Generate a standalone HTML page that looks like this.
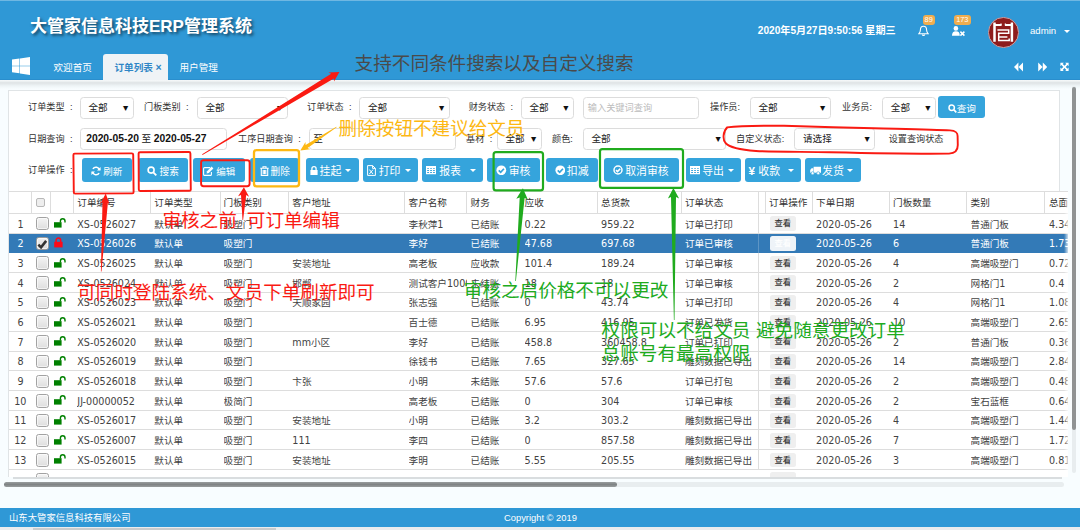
<!DOCTYPE html>
<html lang="zh-CN"><head><meta charset="utf-8"><title>大管家信息科技ERP管理系统</title>
<style>
*{box-sizing:border-box;margin:0;padding:0}
html,body{width:1080px;height:530px;overflow:hidden;background:#f8fdff;font-family:"Liberation Sans","Noto Sans CJK SC",sans-serif;font-size:9.6px;color:#333}
.abs{position:absolute}
#hdr{position:absolute;left:0;top:0;width:1080px;height:80px;background:#2f98d6;border-bottom:1px solid #2a8ecd}
#hshadow{position:absolute;left:0;top:80px;width:1080px;height:9px;background:linear-gradient(#f6f9fa 0,#f0f4f5 12%,#dfe4e6 30%,#e3e8ea 42%,#eef4f6 65%,#f8fdff 100%)}
#topline{position:absolute;left:0;top:0;width:1080px;height:1px;background:#6fb7e2}
#title{position:absolute;left:30px;top:15.1px;font-size:17px;font-weight:bold;color:#fff;line-height:24px;white-space:nowrap;text-shadow:2px 2px 3px rgba(0,0,0,.55);letter-spacing:0px}
.tab{position:absolute;top:54px;height:26px;line-height:27.8px;color:#fff;font-size:9.6px;white-space:nowrap}
#tabact{position:absolute;left:103px;top:54px;width:64.5px;height:26px;background:#eff3f6;border-radius:3px 3px 0 0}
#dt{position:absolute;left:757.8px;top:24.2px;font-size:10.15px;font-weight:bold;color:#fff;line-height:14px;white-space:nowrap}
.badge{position:absolute;background:#f0ad4e;color:#fff;border-radius:3px;font-size:7.4px;line-height:9.4px;height:9.4px;text-align:center}
#panel{position:absolute;left:8px;top:90px;width:1052px;height:390px;background:#fff;border:1px solid #e0e4e6;border-bottom:none}
.lbl{position:absolute;font-size:9.15px;line-height:14px;color:#333;white-space:nowrap}
.sel{position:absolute;height:22px;border:1px solid #dcdcdc;border-radius:3.5px;background:#fff;font-size:9.6px;line-height:20px;padding-left:7.5px;color:#222;white-space:nowrap;overflow:hidden}
.sel i{position:absolute;right:2.6px;top:0.4px;font-style:normal;font-size:8.8px;color:#111}
.btn{position:absolute;top:158.4px;height:23.5px;background:#35a4dc;border-radius:3px;color:#fff;font-size:10.4px;line-height:24.4px;overflow:hidden;text-align:left;white-space:nowrap;text-align:center}
.btn svg{vertical-align:-1.2px}
.caret{display:block;width:0;height:0;border-left:3.2px solid transparent;border-right:3.2px solid transparent;border-top:3.4px solid #fff;vertical-align:1.6px;margin-left:3px}
#thead{position:absolute;left:9px;top:191.3px;width:1058.7px;height:22.5px;background:#fff;border-top:1px solid #ddd;border-bottom:1px solid #ddd}
.vs{position:absolute;top:191.3px;width:1px;height:22.5px;background:#ddd}
.th{position:absolute;top:196px;font-size:9.6px;line-height:14px;color:#333;white-space:nowrap}
.row{position:absolute;left:9px;width:1058.7px;height:19.67px;border-bottom:1px solid #ddd;background:#fff;font-family:"DejaVu Sans","Noto Sans CJK SC",sans-serif;font-size:9.6px;color:#424242}
.row.sel2{background:#337ab7;color:#fff;border-bottom-color:#337ab7}
.c{position:absolute;top:0.8px;line-height:19.6px;white-space:nowrap}
.cb{position:absolute;left:26.5px;top:3.2px;width:13.4px;height:13.4px;border:1px solid #a2a2a2;border-radius:2.6px;background:linear-gradient(#f4f4f4,#dedede);box-shadow:inset 0 0 0 1px rgba(255,255,255,.6)}
.view{position:absolute;left:760.8px;top:2.5px;width:26px;height:14.7px;background:#efefef;border-radius:2.5px;font-size:8.3px;line-height:15.4px;text-align:center;color:#333;font-weight:500;font-family:"Liberation Sans","Noto Sans CJK SC",sans-serif}
.sel2 .view{background:#eef3f8;color:#fff}
#foot{position:absolute;left:0;top:507.8px;width:1080px;height:19.6px;background:#2f98d6;color:#fff;font-size:9.35px;line-height:20.8px}
svg.ov{position:absolute;left:0;top:0;width:1080px;height:530px;pointer-events:none}
svg.ov text{font-family:"Liberation Sans","Noto Sans CJK SC",sans-serif;font-weight:400}
</style></head><body>

<div id="hshadow"></div><div id="hdr"><div id="topline"></div>
<div id="title">大管家信息科技ERP管理系统</div>
<svg class="abs" style="left:11.6px;top:57px" width="18.4" height="18" viewBox="0 0 18.4 18"><path fill="#fff" d="M0 2.6 L7.5 1.5 V8.7 H0Z M8 1.4 L18.4 0 V8.7 H8Z M0 9.2 H7.5 V16.3 L0 15.2Z M8 9.2 H18.4 V18 L8 16.5Z"/></svg>
<div class="tab" style="left:53.5px">欢迎首页</div>
<div id="tabact"></div>
<div class="tab" style="left:114.5px;color:#2f86c6;font-weight:bold">订单列表 <span style="font-size:10.5px;font-weight:bold">×</span></div>
<div class="tab" style="left:179.5px">用户管理</div>
<div id="dt">2020年5月27日9:50:56 星期三</div>
<svg class="abs" style="left:917.5px;top:25px" width="11" height="12" viewBox="0 0 11 12"><path fill="none" stroke="#fff" stroke-width="1.1" d="M5.5 1.2 C3.3 1.2 2.4 3 2.4 5 C2.4 7 1.6 8 0.8 8.8 H10.2 C9.4 8 8.6 7 8.6 5 C8.6 3 7.7 1.2 5.5 1.2Z M4.3 9.6 C4.5 10.6 6.5 10.6 6.7 9.6"/></svg>
<div class="badge" style="left:922.6px;top:15.3px;width:12.2px">89</div>
<svg class="abs" style="left:951.6px;top:25.6px" width="14" height="11" viewBox="0 0 14 11"><circle cx="3.9" cy="2.4" r="2.3" fill="#fff"/><path fill="#fff" d="M0 9.8 C0 6.4 1.3 5.2 3.9 5.2 C6.5 5.2 7.8 6.4 7.8 9.8Z"/><path stroke="#fff" stroke-width="1.5" d="M8.4 5.6 L12.4 9.6 M12.4 5.6 L8.4 9.6"/></svg>
<div class="badge" style="left:954px;top:15.3px;width:16.6px">173</div>
<div class="abs" style="left:988px;top:17.1px;width:30.6px;height:30.6px;border-radius:50%;background:#8e1c1c;border:0.8px solid #c9a0a4"></div>
<svg class="abs" style="left:988px;top:17px" width="31" height="31" viewBox="988 17 31 31"><g fill="none" stroke="#fff"><path stroke-width="2.5" d="M994.5 22.4 V41.8 M1011.9 22.4 V41.8"/><path stroke-width="2" d="M995 25 H1001.4 M1005 25 H1011.4"/><path stroke-width="1.3" d="M1001 23.4 V25.6 M1005.4 23.4 V25.6"/><path stroke-width="1.5" d="M997.4 29.9 H1008.7 V33.3 H998.7 V40.5 H1009.2 V38.4 M998.7 36.9 H1007.4"/></g></svg>
<div class="abs" style="left:1030px;top:24px;font-size:9.6px;line-height:14px;color:#fff">admin</div>
<div class="abs" style="left:1063.5px;top:29.7px;width:0;height:0;border-left:3.2px solid transparent;border-right:3.2px solid transparent;border-top:3.4px solid #fff"></div>
<svg class="abs" style="left:1013px;top:62px" width="60" height="10" viewBox="0 0 60 10"><path fill="#fff" d="M5.4 0.6 L1 5 L5.4 9.4Z M10 0.6 L5.6 5 L10 9.4Z M25.2 0.6 L29.6 5 L25.2 9.4Z M29.8 0.6 L34.2 5 L29.8 9.4Z"/><path fill="#fff" d="M47.4 0.8 H50.8 L49.7 1.9 L51.5 3.7 L53.3 1.9 L52.2 0.8 H55.6 V4.2 L54.5 3.1 L52.7 4.9 L54.5 6.7 L55.6 5.6 V9 H52.2 L53.3 7.9 L51.5 6.1 L49.7 7.9 L50.8 9 H47.4 V5.6 L48.5 6.7 L50.3 4.9 L48.5 3.1 L47.4 4.2Z"/></svg>
</div>
<div id="panel"></div>
<div class="lbl" style="left:28px;top:100.3px">订单类型<span style="margin-left:5.4px">:</span></div>
<div class="sel" style="left:80px;top:96.5px;width:53.6px;">全部<i>▼</i></div>
<div class="lbl" style="left:144px;top:100.3px">门板类别<span style="margin-left:5.4px">:</span></div>
<div class="sel" style="left:197px;top:96.5px;width:90.6px;">全部<i>▼</i></div>
<div class="lbl" style="left:307px;top:100.3px">订单状态<span style="margin-left:5.4px">:</span></div>
<div class="sel" style="left:359.4px;top:96.5px;width:90.2px;">全部<i>▼</i></div>
<div class="lbl" style="left:468.7px;top:100.3px">财务状态<span style="margin-left:5.4px">:</span></div>
<div class="sel" style="left:521px;top:96.5px;width:52.8px;">全部<i>▼</i></div>
<div class="sel" style="left:583px;top:96.5px;width:115.5px;padding-left:3.8px"><span style="color:#bcbcbc;font-size:9.2px">输入关键词查询</span></div>
<div class="lbl" style="left:710px;top:100.3px">操作员:</div>
<div class="sel" style="left:750px;top:96.5px;width:80.6px;">全部<i>▼</i></div>
<div class="lbl" style="left:842px;top:100.3px">业务员:</div>
<div class="sel" style="left:882.3px;top:96.5px;width:53.6px;">全部<i>▼</i></div>
<div class="btn" style="left:938.2px;top:95.5px;width:47.2px;height:22px;line-height:25.4px;font-size:9.6px"><svg width="9" height="9" viewBox="0 0 9 9"><circle cx="3.7" cy="3.7" r="2.7" fill="none" stroke="#fff" stroke-width="1.5"/><path d="M5.7 5.7 L8.3 8.3" stroke="#fff" stroke-width="1.7"/></svg>查询</div>
<div class="lbl" style="left:28px;top:131.6px">日期查询<span style="margin-left:5.4px">:</span></div>
<div class="sel" style="left:80px;top:127.5px;width:147px;padding-left:5.2px;color:#111"><b style="font-size:10.3px">2020-05-20</b> 至 <b style="font-size:10.3px">2020-05-27</b></div>
<div class="lbl" style="left:238px;top:131.6px">工序日期查询<span style="margin-left:5.4px">:</span></div>
<div class="sel" style="left:308.7px;top:127.5px;width:147px;padding-left:3.6px">至</div>
<div class="lbl" style="left:466px;top:131.6px">基材<span style="margin-left:5.4px">:</span></div>
<div class="sel" style="left:497px;top:127.5px;width:44.5px;">全部<i>▼</i></div>
<div class="lbl" style="left:552px;top:131.6px">颜色:</div>
<div class="sel" style="left:583px;top:127.5px;width:143px;">全部<i>▼</i></div>
<div class="lbl" style="left:736px;top:131.6px">自定义状态:</div>
<div class="sel" style="left:794px;top:127.5px;width:81px;padding-left:8px">请选择<i>▼</i></div>
<div class="lbl" style="left:888.7px;top:131.6px">设置查询状态</div>
<div class="lbl" style="left:28px;top:163px">订单操作<span style="margin-left:5.4px">:</span></div>
<div class="btn" style="left:81.6px;width:50.6px;font-size:9.5px"><svg class="abs" style="left:9.3px;top:7.8px" width="10" height="10" viewBox="0 0 10 10"><path fill="none" stroke="#fff" stroke-width="1.6" d="M8.6 4.2 A3.7 3.7 0 0 0 1.9 2.9 M1.4 5.8 A3.7 3.7 0 0 0 8.1 7.1"/><path fill="#fff" d="M9.6 1 V4.6 H6Z M0.4 9 V5.4 H4Z"/></svg><span class="abs" style="left:21.7px;top:1.9px">刷新</span></div>
<div class="btn" style="left:138.2px;width:50px;font-size:9.7px"><svg class="abs" style="left:8.5px;top:7.8px" width="10" height="10" viewBox="0 0 10 10"><circle cx="4.1" cy="4.1" r="3" fill="none" stroke="#fff" stroke-width="1.6"/><path d="M6.3 6.3 L9.3 9.3" stroke="#fff" stroke-width="1.9"/></svg><span class="abs" style="left:21.4px;top:1.9px">搜索</span></div>
<div class="btn" style="left:193.1px;width:52.2px;font-size:9.5px"><svg class="abs" style="left:10.2px;top:7.8px" width="11" height="10" viewBox="0 0 11 10"><path fill="none" stroke="#fff" stroke-width="1.1" d="M7 1.6 H1.6 Q0.6 1.6 0.6 2.6 V8.4 Q0.6 9.4 1.6 9.4 H7.4 Q8.4 9.4 8.4 8.4 V6"/><path fill="#fff" d="M4 5.2 L8.6 0.6 L10.4 2.4 L5.8 7 L3.6 7.4Z"/></svg><span class="abs" style="left:23.2px;top:1.9px">编辑</span></div>
<div class="btn" style="left:250.4px;width:48.5px;font-size:9.7px"><svg class="abs" style="left:9.8px;top:7.8px" width="9" height="10" viewBox="0 0 9 10"><path fill="none" stroke="#fff" stroke-width="1.1" d="M0.3 2.2 H8.7 M3 2 V0.7 H6 V2 M1.3 2.4 V9.4 H7.7 V2.4 M3.2 4 V8 M4.5 4 V8 M5.8 4 V8"/></svg><span class="abs" style="left:20.2px;top:1.9px">删除</span></div>
<div class="btn" style="left:305.9px;width:53px;font-size:10.9px"><svg class="abs" style="left:3.9px;top:7.3px" width="8" height="9" viewBox="0 0 8 9"><path fill="#fff" d="M0.4 4 H7.6 V9 H0.4Z"/><path fill="none" stroke="#fff" stroke-width="1.3" d="M1.9 4.4 V2.8 A2.1 2.1 0 0 1 6.1 2.8 V4.4"/></svg><span class="abs" style="left:13.7px;top:1.1px">挂起</span><span class="caret abs" style="left:39.1px;top:10.6px;margin:0"></span></div>
<div class="btn" style="left:362.5px;width:55.8px;font-size:10.9px"><svg class="abs" style="left:4.2px;top:6.3px" width="9" height="11" viewBox="0 0 9 11"><path fill="none" stroke="#fff" stroke-width="1" d="M0.6 0.6 H5.6 L8.4 3.4 V10.4 H0.6Z M5.6 0.6 V3.4 H8.4 M2.4 4.6 L6 9 M6 4.6 L2.4 9"/></svg><span class="abs" style="left:16.2px;top:1.1px">打印</span><span class="caret abs" style="left:42.5px;top:10.6px;margin:0"></span></div>
<div class="btn" style="left:422px;width:61px;font-size:10.9px"><svg class="abs" style="left:4.4px;top:7.3px" width="10" height="9" viewBox="0 0 10 9"><path fill="none" stroke="#fff" stroke-width="1.15" d="M0.6 0.6 H9.4 V7.6 H0.6Z M0.6 3.4 H9.4 M0.6 5.5 H9.4 M3.6 1.6 V7.6 M6.5 1.6 V7.6"/><path fill="#fff" d="M0.6 0.6 H9.4 V1.9 H0.6Z"/></svg><span class="abs" style="left:17.2px;top:1.1px">报表</span><span class="caret abs" style="left:47.5px;top:10.6px;margin:0"></span></div>
<div class="btn" style="left:486.8px;width:53.5px;font-size:10.9px"><svg class="abs" style="left:9.5px;top:6.5px" width="10.6" height="10.6" viewBox="0 0 10 10"><circle cx="5" cy="5" r="4.6" fill="#fff"/><path fill="none" stroke="#35a4dc" stroke-width="1.6" d="M2.6 5.1 L4.4 6.9 L7.5 3.5"/></svg><span class="abs" style="left:21.9px;top:1.1px">审核</span></div>
<div class="btn" style="left:545.5px;width:52.8px;font-size:10.9px"><svg class="abs" style="left:9.4px;top:6.5px" width="10.6" height="10.6" viewBox="0 0 10 10"><circle cx="5" cy="5" r="4.6" fill="#fff"/><path fill="none" stroke="#35a4dc" stroke-width="1.6" d="M2.6 5.1 L4.4 6.9 L7.5 3.5"/></svg><span class="abs" style="left:21.3px;top:1.1px">扣减</span></div>
<div class="btn" style="left:603.75px;width:75px;font-size:10.9px"><svg class="abs" style="left:9.4px;top:6.8px" width="10" height="10" viewBox="0 0 10 10"><circle cx="5" cy="5" r="4" fill="none" stroke="#fff" stroke-width="1.5"/><path fill="none" stroke="#fff" stroke-width="1.6" d="M3 5.1 L4.5 6.6 L7.2 3.7"/></svg><span class="abs" style="left:21.4px;top:1.1px">取消审核</span></div>
<div class="btn" style="left:685.75px;width:55.5px;font-size:10.9px"><svg class="abs" style="left:3.8px;top:7.3px" width="10" height="9" viewBox="0 0 10 9"><path fill="none" stroke="#fff" stroke-width="1.15" d="M0.6 0.6 H9.4 V7.6 H0.6Z M0.6 3.4 H9.4 M0.6 5.5 H9.4 M3.6 1.6 V7.6 M6.5 1.6 V7.6"/><path fill="#fff" d="M0.6 0.6 H9.4 V1.9 H0.6Z"/></svg><span class="abs" style="left:16.4px;top:1.1px">导出</span><span class="caret abs" style="left:42.2px;top:10.6px;margin:0"></span></div>
<div class="btn" style="left:745px;width:55.75px;font-size:10.9px"><span class="abs" style="left:3.5px;top:0.5px;font-weight:bold;font-size:11.6px">¥</span><span class="abs" style="left:13.3px;top:1.1px">收款</span><span class="caret abs" style="left:42.5px;top:10.6px;margin:0"></span></div>
<div class="btn" style="left:805px;width:55.5px;font-size:10.9px"><svg class="abs" style="left:4.5px;top:7.3px" width="11" height="9" viewBox="0 0 11 9"><path fill="#fff" d="M3.6 0.8 H11 V6.8 H3.6Z M0.2 4 L1.6 2.2 H3.2 V6.8 H0.2Z"/><circle cx="2.6" cy="7.2" r="1.5" fill="#fff" stroke="#35a4dc" stroke-width="0.6"/><circle cx="8.2" cy="7.2" r="1.5" fill="#fff" stroke="#35a4dc" stroke-width="0.6"/></svg><span class="abs" style="left:17.1px;top:1.1px">发货</span><span class="caret abs" style="left:42.0px;top:10.6px;margin:0"></span></div>
<div id="thead"></div>
<div class="vs" style="left:31px"></div>
<div class="vs" style="left:50px"></div>
<div class="vs" style="left:73px"></div>
<div class="vs" style="left:150px"></div>
<div class="vs" style="left:219.5px"></div>
<div class="vs" style="left:288px"></div>
<div class="vs" style="left:404px"></div>
<div class="vs" style="left:466px"></div>
<div class="vs" style="left:520px"></div>
<div class="vs" style="left:597px"></div>
<div class="vs" style="left:681px"></div>
<div class="vs" style="left:758px"></div>
<div class="vs" style="left:765px"></div>
<div class="vs" style="left:812px"></div>
<div class="vs" style="left:889px"></div>
<div class="vs" style="left:966px"></div>
<div class="vs" style="left:1044px"></div>
<div class="abs" style="left:35.8px;top:197.8px;width:9.6px;height:9.6px;border:1px solid #b8b8b8;border-radius:2px;background:#eee"></div>
<div class="th" style="left:77.3px">订单编号</div>
<div class="th" style="left:154.29999999999998px">订单类型</div>
<div class="th" style="left:223.6px">门板类别</div>
<div class="th" style="left:292.3px">客户地址</div>
<div class="th" style="left:408.6px">客户名称</div>
<div class="th" style="left:470.6px">财务</div>
<div class="th" style="left:524.6px">应收</div>
<div class="th" style="left:601.1px">总货款</div>
<div class="th" style="left:684.9px">订单状态</div>
<div class="th" style="left:769.1px">订单操作</div>
<div class="th" style="left:816.1px">下单日期</div>
<div class="th" style="left:893.1px">门板数量</div>
<div class="th" style="left:970.6px">类别</div>
<div class="th" style="left:1049.0px">总面</div>
<div class="row" style="top:213.90px">
<div class="c" style="left:8.6px">1</div>
<div class="cb"></div>
<svg class="abs" style="left:45.3px;top:4.4px" width="13" height="10" viewBox="0 0 13 10"><path fill="#008000" d="M0 4.2 H7.6 V9.6 H0Z"/><path fill="none" stroke="#008000" stroke-width="1.4" d="M6.4 4.6 V3 A2.3 2.3 0 0 1 11 3 V4.4"/></svg>
<div class="c" style="left:68.3px;width:73.4px;overflow:hidden">XS-0526027</div>
<div class="c" style="left:145.3px;width:65.7px;overflow:hidden">默认单</div>
<div class="c" style="left:214.6px;width:65.1px;overflow:hidden">吸塑门</div>
<div class="c" style="left:399.6px;width:58.4px;overflow:hidden">李秋萍1</div>
<div class="c" style="left:461.6px;width:50.4px;overflow:hidden">已结账</div>
<div class="c" style="left:515.6px;width:72.9px;overflow:hidden">0.22</div>
<div class="c" style="left:592.1px;width:80.2px;overflow:hidden">959.22</div>
<div class="c" style="left:675.9px;width:73.6px;overflow:hidden">订单已打印</div>
<div class="c" style="left:807.1px;width:73.4px;overflow:hidden">2020-05-26</div>
<div class="c" style="left:884.1px;width:73.9px;overflow:hidden">14</div>
<div class="c" style="left:961.6px;width:74.8px;overflow:hidden">普通门板</div>
<div class="c" style="left:1040.0px;width:26.0px;overflow:hidden">4.34</div>
<div class="view">查看</div>
<div class="abs" style="left:749px;top:0;width:1px;height:19.67px;background:#ddd"></div>
</div>
<div class="row sel2" style="top:233.58px">
<div class="c" style="left:8.6px">2</div>
<div class="cb" style="background:linear-gradient(#eee,#dcdcdc);border-color:#9a9a9a"><svg class="abs" style="left:0.8px;top:1px" width="10.4" height="10.4" viewBox="0 0 10 10"><path fill="none" stroke="#333" stroke-width="2.5" d="M1.3 5.4 L3.9 8 L8.8 1.8"/></svg></div>
<svg class="abs" style="left:45.3px;top:3.6px" width="9" height="11" viewBox="0 0 9 11"><path fill="#ff0a18" d="M0.2 4.8 H8.6 V10.4 H0.2Z"/><path fill="none" stroke="#ff0a18" stroke-width="1.5" d="M2.1 5 V3.3 A2.3 2.3 0 0 1 6.7 3.3 V5"/></svg>
<div class="c" style="left:68.3px;width:73.4px;overflow:hidden">XS-0526026</div>
<div class="c" style="left:145.3px;width:65.7px;overflow:hidden">默认单</div>
<div class="c" style="left:214.6px;width:65.1px;overflow:hidden">吸塑门</div>
<div class="c" style="left:399.6px;width:58.4px;overflow:hidden">李好</div>
<div class="c" style="left:461.6px;width:50.4px;overflow:hidden">已结账</div>
<div class="c" style="left:515.6px;width:72.9px;overflow:hidden">47.68</div>
<div class="c" style="left:592.1px;width:80.2px;overflow:hidden">697.68</div>
<div class="c" style="left:675.9px;width:73.6px;overflow:hidden">订单已审核</div>
<div class="c" style="left:807.1px;width:73.4px;overflow:hidden">2020-05-26</div>
<div class="c" style="left:884.1px;width:73.9px;overflow:hidden">6</div>
<div class="c" style="left:961.6px;width:74.8px;overflow:hidden">普通门板</div>
<div class="c" style="left:1040.0px;width:26.0px;overflow:hidden">1.73</div>
<div class="view">查看</div>
<div class="abs" style="left:749px;top:0;width:1px;height:19.67px;background:#5d95c5"></div>
</div>
<div class="row" style="top:253.26px">
<div class="c" style="left:8.6px">3</div>
<div class="cb"></div>
<svg class="abs" style="left:45.3px;top:4.4px" width="13" height="10" viewBox="0 0 13 10"><path fill="#008000" d="M0 4.2 H7.6 V9.6 H0Z"/><path fill="none" stroke="#008000" stroke-width="1.4" d="M6.4 4.6 V3 A2.3 2.3 0 0 1 11 3 V4.4"/></svg>
<div class="c" style="left:68.3px;width:73.4px;overflow:hidden">XS-0526025</div>
<div class="c" style="left:145.3px;width:65.7px;overflow:hidden">默认单</div>
<div class="c" style="left:214.6px;width:65.1px;overflow:hidden">吸塑门</div>
<div class="c" style="left:283.3px;width:112.7px;overflow:hidden">安装地址</div>
<div class="c" style="left:399.6px;width:58.4px;overflow:hidden">高老板</div>
<div class="c" style="left:461.6px;width:50.4px;overflow:hidden">应收款</div>
<div class="c" style="left:515.6px;width:72.9px;overflow:hidden">101.4</div>
<div class="c" style="left:592.1px;width:80.2px;overflow:hidden">189.24</div>
<div class="c" style="left:675.9px;width:73.6px;overflow:hidden">订单已审核</div>
<div class="c" style="left:807.1px;width:73.4px;overflow:hidden">2020-05-26</div>
<div class="c" style="left:884.1px;width:73.9px;overflow:hidden">4</div>
<div class="c" style="left:961.6px;width:74.8px;overflow:hidden">高端吸塑门</div>
<div class="c" style="left:1040.0px;width:26.0px;overflow:hidden">0.72</div>
<div class="view">查看</div>
<div class="abs" style="left:749px;top:0;width:1px;height:19.67px;background:#ddd"></div>
</div>
<div class="row" style="top:272.94px">
<div class="c" style="left:8.6px">4</div>
<div class="cb"></div>
<svg class="abs" style="left:45.3px;top:4.4px" width="13" height="10" viewBox="0 0 13 10"><path fill="#008000" d="M0 4.2 H7.6 V9.6 H0Z"/><path fill="none" stroke="#008000" stroke-width="1.4" d="M6.4 4.6 V3 A2.3 2.3 0 0 1 11 3 V4.4"/></svg>
<div class="c" style="left:68.3px;width:73.4px;overflow:hidden">XS-0526024</div>
<div class="c" style="left:145.3px;width:65.7px;overflow:hidden">默认单</div>
<div class="c" style="left:214.6px;width:65.1px;overflow:hidden">吸塑门</div>
<div class="c" style="left:283.3px;width:112.7px;overflow:hidden">邯郸</div>
<div class="c" style="left:399.6px;width:58.4px;overflow:hidden">测试客户1000</div>
<div class="c" style="left:461.6px;width:50.4px;overflow:hidden">未结账</div>
<div class="c" style="left:515.6px;width:72.9px;overflow:hidden">18</div>
<div class="c" style="left:592.1px;width:80.2px;overflow:hidden">18</div>
<div class="c" style="left:675.9px;width:73.6px;overflow:hidden">订单已审核</div>
<div class="c" style="left:807.1px;width:73.4px;overflow:hidden">2020-05-26</div>
<div class="c" style="left:884.1px;width:73.9px;overflow:hidden">2</div>
<div class="c" style="left:961.6px;width:74.8px;overflow:hidden">网格门1</div>
<div class="c" style="left:1040.0px;width:26.0px;overflow:hidden">0.4</div>
<div class="view">查看</div>
<div class="abs" style="left:749px;top:0;width:1px;height:19.67px;background:#ddd"></div>
</div>
<div class="row" style="top:292.62px">
<div class="c" style="left:8.6px">5</div>
<div class="cb"></div>
<svg class="abs" style="left:45.3px;top:4.4px" width="13" height="10" viewBox="0 0 13 10"><path fill="#008000" d="M0 4.2 H7.6 V9.6 H0Z"/><path fill="none" stroke="#008000" stroke-width="1.4" d="M6.4 4.6 V3 A2.3 2.3 0 0 1 11 3 V4.4"/></svg>
<div class="c" style="left:68.3px;width:73.4px;overflow:hidden">XS-0526023</div>
<div class="c" style="left:145.3px;width:65.7px;overflow:hidden">默认单</div>
<div class="c" style="left:214.6px;width:65.1px;overflow:hidden">吸塑门</div>
<div class="c" style="left:283.3px;width:112.7px;overflow:hidden">天顺家园</div>
<div class="c" style="left:399.6px;width:58.4px;overflow:hidden">张志强</div>
<div class="c" style="left:461.6px;width:50.4px;overflow:hidden">已结账</div>
<div class="c" style="left:515.6px;width:72.9px;overflow:hidden">0</div>
<div class="c" style="left:592.1px;width:80.2px;overflow:hidden">43.74</div>
<div class="c" style="left:675.9px;width:73.6px;overflow:hidden">订单已打印</div>
<div class="c" style="left:807.1px;width:73.4px;overflow:hidden">2020-05-26</div>
<div class="c" style="left:884.1px;width:73.9px;overflow:hidden">4</div>
<div class="c" style="left:961.6px;width:74.8px;overflow:hidden">网格门1</div>
<div class="c" style="left:1040.0px;width:26.0px;overflow:hidden">1.08</div>
<div class="view">查看</div>
<div class="abs" style="left:749px;top:0;width:1px;height:19.67px;background:#ddd"></div>
</div>
<div class="row" style="top:312.30px">
<div class="c" style="left:8.6px">6</div>
<div class="cb"></div>
<svg class="abs" style="left:45.3px;top:4.4px" width="13" height="10" viewBox="0 0 13 10"><path fill="#008000" d="M0 4.2 H7.6 V9.6 H0Z"/><path fill="none" stroke="#008000" stroke-width="1.4" d="M6.4 4.6 V3 A2.3 2.3 0 0 1 11 3 V4.4"/></svg>
<div class="c" style="left:68.3px;width:73.4px;overflow:hidden">XS-0526021</div>
<div class="c" style="left:145.3px;width:65.7px;overflow:hidden">默认单</div>
<div class="c" style="left:214.6px;width:65.1px;overflow:hidden">吸塑门</div>
<div class="c" style="left:399.6px;width:58.4px;overflow:hidden">百士德</div>
<div class="c" style="left:461.6px;width:50.4px;overflow:hidden">已结账</div>
<div class="c" style="left:515.6px;width:72.9px;overflow:hidden">6.95</div>
<div class="c" style="left:592.1px;width:80.2px;overflow:hidden">416.95</div>
<div class="c" style="left:675.9px;width:73.6px;overflow:hidden">订单已发货</div>
<div class="c" style="left:807.1px;width:73.4px;overflow:hidden">2020-05-26</div>
<div class="c" style="left:884.1px;width:73.9px;overflow:hidden">10</div>
<div class="c" style="left:961.6px;width:74.8px;overflow:hidden">高端吸塑门</div>
<div class="c" style="left:1040.0px;width:26.0px;overflow:hidden">2.65</div>
<div class="view">查看</div>
<div class="abs" style="left:749px;top:0;width:1px;height:19.67px;background:#ddd"></div>
</div>
<div class="row" style="top:331.98px">
<div class="c" style="left:8.6px">7</div>
<div class="cb"></div>
<svg class="abs" style="left:45.3px;top:4.4px" width="13" height="10" viewBox="0 0 13 10"><path fill="#008000" d="M0 4.2 H7.6 V9.6 H0Z"/><path fill="none" stroke="#008000" stroke-width="1.4" d="M6.4 4.6 V3 A2.3 2.3 0 0 1 11 3 V4.4"/></svg>
<div class="c" style="left:68.3px;width:73.4px;overflow:hidden">XS-0526020</div>
<div class="c" style="left:145.3px;width:65.7px;overflow:hidden">默认单</div>
<div class="c" style="left:214.6px;width:65.1px;overflow:hidden">吸塑门</div>
<div class="c" style="left:283.3px;width:112.7px;overflow:hidden">mm小区</div>
<div class="c" style="left:399.6px;width:58.4px;overflow:hidden">李好</div>
<div class="c" style="left:461.6px;width:50.4px;overflow:hidden">已结账</div>
<div class="c" style="left:515.6px;width:72.9px;overflow:hidden">458.8</div>
<div class="c" style="left:592.1px;width:80.2px;overflow:hidden">360458.8</div>
<div class="c" style="left:675.9px;width:73.6px;overflow:hidden">订单已打印</div>
<div class="c" style="left:807.1px;width:73.4px;overflow:hidden">2020-05-26</div>
<div class="c" style="left:884.1px;width:73.9px;overflow:hidden">2</div>
<div class="c" style="left:961.6px;width:74.8px;overflow:hidden">普通门板</div>
<div class="c" style="left:1040.0px;width:26.0px;overflow:hidden">0.36</div>
<div class="view">查看</div>
<div class="abs" style="left:749px;top:0;width:1px;height:19.67px;background:#ddd"></div>
</div>
<div class="row" style="top:351.66px">
<div class="c" style="left:8.6px">8</div>
<div class="cb"></div>
<svg class="abs" style="left:45.3px;top:4.4px" width="13" height="10" viewBox="0 0 13 10"><path fill="#008000" d="M0 4.2 H7.6 V9.6 H0Z"/><path fill="none" stroke="#008000" stroke-width="1.4" d="M6.4 4.6 V3 A2.3 2.3 0 0 1 11 3 V4.4"/></svg>
<div class="c" style="left:68.3px;width:73.4px;overflow:hidden">XS-0526019</div>
<div class="c" style="left:145.3px;width:65.7px;overflow:hidden">默认单</div>
<div class="c" style="left:214.6px;width:65.1px;overflow:hidden">吸塑门</div>
<div class="c" style="left:399.6px;width:58.4px;overflow:hidden">徐钱书</div>
<div class="c" style="left:461.6px;width:50.4px;overflow:hidden">已结账</div>
<div class="c" style="left:515.6px;width:72.9px;overflow:hidden">7.65</div>
<div class="c" style="left:592.1px;width:80.2px;overflow:hidden">327.65</div>
<div class="c" style="left:675.9px;width:73.6px;overflow:hidden">雕刻数据已导出</div>
<div class="c" style="left:807.1px;width:73.4px;overflow:hidden">2020-05-26</div>
<div class="c" style="left:884.1px;width:73.9px;overflow:hidden">14</div>
<div class="c" style="left:961.6px;width:74.8px;overflow:hidden">高端吸塑门</div>
<div class="c" style="left:1040.0px;width:26.0px;overflow:hidden">2.84</div>
<div class="view">查看</div>
<div class="abs" style="left:749px;top:0;width:1px;height:19.67px;background:#ddd"></div>
</div>
<div class="row" style="top:371.34px">
<div class="c" style="left:8.6px">9</div>
<div class="cb"></div>
<svg class="abs" style="left:45.3px;top:4.4px" width="13" height="10" viewBox="0 0 13 10"><path fill="#008000" d="M0 4.2 H7.6 V9.6 H0Z"/><path fill="none" stroke="#008000" stroke-width="1.4" d="M6.4 4.6 V3 A2.3 2.3 0 0 1 11 3 V4.4"/></svg>
<div class="c" style="left:68.3px;width:73.4px;overflow:hidden">XS-0526018</div>
<div class="c" style="left:145.3px;width:65.7px;overflow:hidden">默认单</div>
<div class="c" style="left:214.6px;width:65.1px;overflow:hidden">吸塑门</div>
<div class="c" style="left:283.3px;width:112.7px;overflow:hidden">卞张</div>
<div class="c" style="left:399.6px;width:58.4px;overflow:hidden">小明</div>
<div class="c" style="left:461.6px;width:50.4px;overflow:hidden">未结账</div>
<div class="c" style="left:515.6px;width:72.9px;overflow:hidden">57.6</div>
<div class="c" style="left:592.1px;width:80.2px;overflow:hidden">57.6</div>
<div class="c" style="left:675.9px;width:73.6px;overflow:hidden">订单已打包</div>
<div class="c" style="left:807.1px;width:73.4px;overflow:hidden">2020-05-26</div>
<div class="c" style="left:884.1px;width:73.9px;overflow:hidden">2</div>
<div class="c" style="left:961.6px;width:74.8px;overflow:hidden">高端吸塑门</div>
<div class="c" style="left:1040.0px;width:26.0px;overflow:hidden">0.48</div>
<div class="view">查看</div>
<div class="abs" style="left:749px;top:0;width:1px;height:19.67px;background:#ddd"></div>
</div>
<div class="row" style="top:391.02px">
<div class="c" style="left:5.2px">10</div>
<div class="cb"></div>
<svg class="abs" style="left:45.3px;top:4.4px" width="13" height="10" viewBox="0 0 13 10"><path fill="#008000" d="M0 4.2 H7.6 V9.6 H0Z"/><path fill="none" stroke="#008000" stroke-width="1.4" d="M6.4 4.6 V3 A2.3 2.3 0 0 1 11 3 V4.4"/></svg>
<div class="c" style="left:68.3px;width:73.4px;overflow:hidden">JJ-00000052</div>
<div class="c" style="left:145.3px;width:65.7px;overflow:hidden">默认单</div>
<div class="c" style="left:214.6px;width:65.1px;overflow:hidden">极简门</div>
<div class="c" style="left:399.6px;width:58.4px;overflow:hidden">高老板</div>
<div class="c" style="left:461.6px;width:50.4px;overflow:hidden">已结账</div>
<div class="c" style="left:515.6px;width:72.9px;overflow:hidden">0</div>
<div class="c" style="left:592.1px;width:80.2px;overflow:hidden">304</div>
<div class="c" style="left:675.9px;width:73.6px;overflow:hidden">订单已审核</div>
<div class="c" style="left:807.1px;width:73.4px;overflow:hidden">2020-05-26</div>
<div class="c" style="left:884.1px;width:73.9px;overflow:hidden">2</div>
<div class="c" style="left:961.6px;width:74.8px;overflow:hidden">宝石蓝框</div>
<div class="c" style="left:1040.0px;width:26.0px;overflow:hidden">0.64</div>
<div class="view">查看</div>
<div class="abs" style="left:749px;top:0;width:1px;height:19.67px;background:#ddd"></div>
</div>
<div class="row" style="top:410.70px">
<div class="c" style="left:5.2px">11</div>
<div class="cb"></div>
<svg class="abs" style="left:45.3px;top:4.4px" width="13" height="10" viewBox="0 0 13 10"><path fill="#008000" d="M0 4.2 H7.6 V9.6 H0Z"/><path fill="none" stroke="#008000" stroke-width="1.4" d="M6.4 4.6 V3 A2.3 2.3 0 0 1 11 3 V4.4"/></svg>
<div class="c" style="left:68.3px;width:73.4px;overflow:hidden">XS-0526017</div>
<div class="c" style="left:145.3px;width:65.7px;overflow:hidden">默认单</div>
<div class="c" style="left:214.6px;width:65.1px;overflow:hidden">吸塑门</div>
<div class="c" style="left:283.3px;width:112.7px;overflow:hidden">安装地址</div>
<div class="c" style="left:399.6px;width:58.4px;overflow:hidden">小明</div>
<div class="c" style="left:461.6px;width:50.4px;overflow:hidden">已结账</div>
<div class="c" style="left:515.6px;width:72.9px;overflow:hidden">3.2</div>
<div class="c" style="left:592.1px;width:80.2px;overflow:hidden">303.2</div>
<div class="c" style="left:675.9px;width:73.6px;overflow:hidden">雕刻数据已导出</div>
<div class="c" style="left:807.1px;width:73.4px;overflow:hidden">2020-05-26</div>
<div class="c" style="left:884.1px;width:73.9px;overflow:hidden">4</div>
<div class="c" style="left:961.6px;width:74.8px;overflow:hidden">高端吸塑门</div>
<div class="c" style="left:1040.0px;width:26.0px;overflow:hidden">1.44</div>
<div class="view">查看</div>
<div class="abs" style="left:749px;top:0;width:1px;height:19.67px;background:#ddd"></div>
</div>
<div class="row" style="top:430.38px">
<div class="c" style="left:5.2px">12</div>
<div class="cb"></div>
<svg class="abs" style="left:45.3px;top:4.4px" width="13" height="10" viewBox="0 0 13 10"><path fill="#008000" d="M0 4.2 H7.6 V9.6 H0Z"/><path fill="none" stroke="#008000" stroke-width="1.4" d="M6.4 4.6 V3 A2.3 2.3 0 0 1 11 3 V4.4"/></svg>
<div class="c" style="left:68.3px;width:73.4px;overflow:hidden">XS-0526007</div>
<div class="c" style="left:145.3px;width:65.7px;overflow:hidden">默认单</div>
<div class="c" style="left:214.6px;width:65.1px;overflow:hidden">吸塑门</div>
<div class="c" style="left:283.3px;width:112.7px;overflow:hidden">111</div>
<div class="c" style="left:399.6px;width:58.4px;overflow:hidden">李四</div>
<div class="c" style="left:461.6px;width:50.4px;overflow:hidden">已结账</div>
<div class="c" style="left:515.6px;width:72.9px;overflow:hidden">0</div>
<div class="c" style="left:592.1px;width:80.2px;overflow:hidden">857.58</div>
<div class="c" style="left:675.9px;width:73.6px;overflow:hidden">雕刻数据已导出</div>
<div class="c" style="left:807.1px;width:73.4px;overflow:hidden">2020-05-26</div>
<div class="c" style="left:884.1px;width:73.9px;overflow:hidden">7</div>
<div class="c" style="left:961.6px;width:74.8px;overflow:hidden">高端吸塑门</div>
<div class="c" style="left:1040.0px;width:26.0px;overflow:hidden">1.72</div>
<div class="view">查看</div>
<div class="abs" style="left:749px;top:0;width:1px;height:19.67px;background:#ddd"></div>
</div>
<div class="row" style="top:450.06px">
<div class="c" style="left:5.2px">13</div>
<div class="cb"></div>
<svg class="abs" style="left:45.3px;top:4.4px" width="13" height="10" viewBox="0 0 13 10"><path fill="#008000" d="M0 4.2 H7.6 V9.6 H0Z"/><path fill="none" stroke="#008000" stroke-width="1.4" d="M6.4 4.6 V3 A2.3 2.3 0 0 1 11 3 V4.4"/></svg>
<div class="c" style="left:68.3px;width:73.4px;overflow:hidden">XS-0526015</div>
<div class="c" style="left:145.3px;width:65.7px;overflow:hidden">默认单</div>
<div class="c" style="left:214.6px;width:65.1px;overflow:hidden">吸塑门</div>
<div class="c" style="left:283.3px;width:112.7px;overflow:hidden">安装地址</div>
<div class="c" style="left:399.6px;width:58.4px;overflow:hidden">李明</div>
<div class="c" style="left:461.6px;width:50.4px;overflow:hidden">已结账</div>
<div class="c" style="left:515.6px;width:72.9px;overflow:hidden">5.55</div>
<div class="c" style="left:592.1px;width:80.2px;overflow:hidden">205.55</div>
<div class="c" style="left:675.9px;width:73.6px;overflow:hidden">雕刻数据已导出</div>
<div class="c" style="left:807.1px;width:73.4px;overflow:hidden">2020-05-26</div>
<div class="c" style="left:884.1px;width:73.9px;overflow:hidden">3</div>
<div class="c" style="left:961.6px;width:74.8px;overflow:hidden">高端吸塑门</div>
<div class="c" style="left:1040.0px;width:26.0px;overflow:hidden">0.81</div>
<div class="view">查看</div>
<div class="abs" style="left:749px;top:0;width:1px;height:19.67px;background:#ddd"></div>
</div>
<div class="row" style="top:469.74px;height:7px;border-bottom:none;overflow:hidden"><div class="cb"></div><div class="view"></div></div>
<div class="abs" style="left:1063.7px;top:192px;width:4.3px;height:285px;background:linear-gradient(90deg,rgba(255,255,255,0),rgba(255,255,255,.75))"></div>
<div class="abs" style="left:1068px;top:186px;width:13px;height:300px;background:#f8fdff"></div>
<div class="abs" style="left:1071.7px;top:86px;width:4.2px;height:387px;border-radius:2.1px;background:#e8edef"></div>
<div class="abs" style="left:1071.6px;top:87px;width:4.4px;height:342.8px;border-radius:2.2px;background:#8f9394"></div>
<div class="abs" style="left:0;top:476.6px;width:1080px;height:31.2px;background:#f8fdff"></div>
<div class="abs" style="left:13px;top:477px;width:1049px;height:1.8px;background:#d9dddf"></div>
<div class="abs" style="left:4px;top:481.9px;width:1059.5px;height:5px;border-radius:2.5px;background:#e8edef"></div>
<div class="abs" style="left:4px;top:481.8px;width:613px;height:5.1px;border-radius:2.6px;background:linear-gradient(#999d9e,#808485 50%,#999d9e)"></div>
<div id="foot"><span class="abs" style="left:9px">山东大管家信息科技有限公司</span><span class="abs" style="left:504px">Copyright © 2019</span></div>
<div class="abs" style="left:0;top:527.4px;width:1080px;height:2.6px;background:#eaecee"></div>
<div class="abs" style="left:33px;top:527.6px;width:243px;height:2.4px;background:#c9cbcd"></div>
<svg class="ov" viewBox="0 0 1080 530">
<g fill="none" stroke="#fa1a12" stroke-width="1.9" stroke-linejoin="round">
<path d="M74.6 153.6 Q73.4 153.6 73.4 155 L73.8 192.2 Q73.8 193.6 75.2 193.6 L132.4 193.4 Q133.6 193.4 133.6 192 L133.2 154.8 Q133.2 153.4 131.8 153.4 Z"/>
<path d="M140 152.2 Q138.6 152.2 138.6 153.6 L138.8 189.6 Q138.8 191 140.2 191 L189.4 190.8 Q190.8 190.8 190.8 189.4 L190.4 153.4 Q190.4 152 189 152 Z"/>
<rect x="201.1" y="160.2" width="48.5" height="26" rx="2.4"/>
<path d="M727 127.4 C740 125.6 770 125.6 784 125.8 C800 126.4 850 127.6 874 128.2 C905 129 935 129.6 950 130.4 C956 130.8 957.6 132.5 957.6 136 L957.8 145 C957.8 151 955 153.4 949 153.6 C920 154.2 880 153.4 830 152.3 C800 151.8 770 151.8 756 151 C742 150 730 148 725.5 143 C722.5 139.5 722.8 131.5 727.6 127" stroke-width="1.9"/>
</g>
<rect x="254" y="150.2" width="45" height="36.2" rx="2.6" fill="none" stroke="#fdb813" stroke-width="2.3"/>
<g fill="none" stroke="#20ab1e" stroke-width="2.2"><rect x="493.6" y="152.2" width="49.4" height="38.2" rx="2.4"/><rect x="600" y="149.2" width="83" height="38.6" rx="2.4"/></g>
<path fill="#fa1a12" d="M202.5 154.9 L333.9 78.4 L334.0 81.4 L339.4 72.0 L328.5 72.4 L331.2 73.8 L202.1 154.3 Z"/>
<path fill="#fa1a12" d="M101.5 271.5 L107.9 202.4 L109.6 204.0 L105.7 193.6 L100.6 203.5 L102.5 202.1 L100.9 271.5 Z"/>
<path fill="#fa1a12" d="M243.1 220.0 L246.2 195.1 L249.1 196.7 L243.9 187.3 L238.1 196.3 L241.0 194.9 L242.5 220.0 Z"/>
<path fill="#fdb813" d="M336.3 126.7 L305.6 145.0 L305.5 142.1 L300.3 150.6 L310.2 149.3 L307.6 148.0 L336.7 127.3 Z"/>
<path fill="#20ab1e" d="M515.9 281.0 L524.6 197.9 L527.8 199.6 L522.9 188.2 L516.3 198.7 L519.7 197.5 L515.3 281.0 Z"/>
<path fill="#20ab1e" d="M674.5 320.0 L676.0 197.1 L679.1 198.6 L673.4 188.0 L667.9 198.6 L671.0 197.1 L673.9 320.0 Z"/>
<text x="354.6" y="69.8" font-size="18.6" fill="#4a4a4a">支持不同条件搜索以及自定义搜索</text>
<text x="338.6" y="134.9" font-size="18.6" fill="#fdb813">删除按钮不建议给文员</text>
<text y="226.5" font-size="18.6" fill="#fa1a12"><tspan x="162.4">审核之前</tspan><tspan x="246.8">可订单编辑</tspan></text>
<text x="77.2" y="299.4" font-size="18.6" fill="#fa1a12">可同时登陆系统、文员下单刷新即可</text>
<text x="463.8" y="296.8" font-size="18.6" fill="#20ab1e">审核之启价格不可以更改</text>
<text y="337" font-size="18.6" fill="#20ab1e"><tspan x="601.6">权限可以不给文员</tspan><tspan x="756">避免随意更改订单</tspan></text>
<text x="601.6" y="360.4" font-size="18.6" fill="#20ab1e">总账号有最高权限</text>
</svg>
</body></html>
